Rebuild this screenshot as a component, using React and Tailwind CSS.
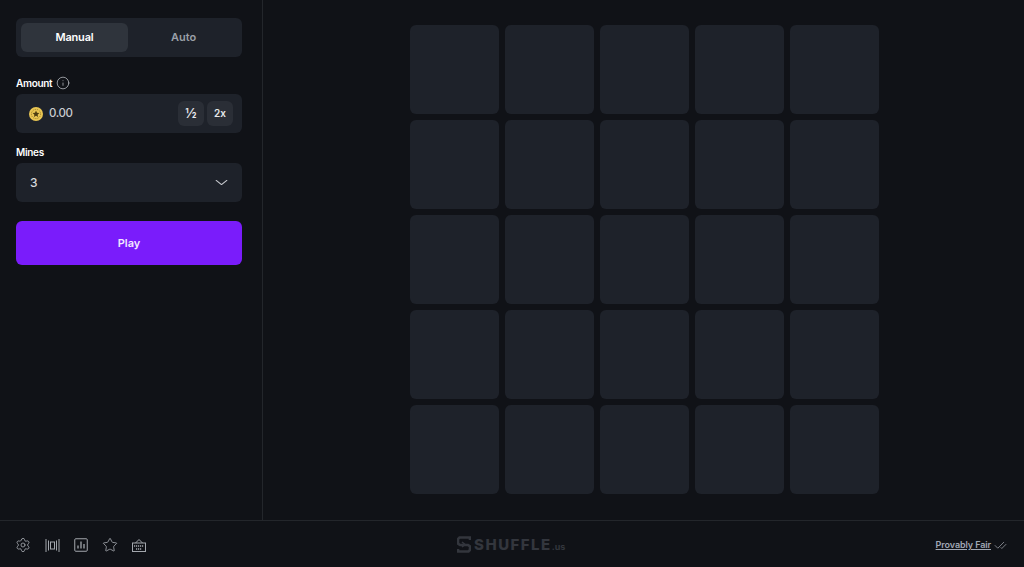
import { Info, ChevronDown, Settings, Star, CheckCheck } from 'lucide-react'

const tiles = Array.from({ length: 25 }, (_, i) => i)

function CoinIcon() {
  return (
    <svg width="14" height="14" viewBox="0 0 14 14" className="shrink-0">
      <circle cx="7" cy="7" r="7" fill="#e9c653" />
      <circle cx="7" cy="7" r="4.6" fill="none" stroke="#8a6f1f" strokeWidth="0.8" strokeDasharray="1.2 1" />
      <path d="M7 3.6l1 2.2 2.4.25-1.8 1.6.5 2.35L7 8.8l-2.1 1.2.5-2.35-1.8-1.6L6 5.8z" fill="#4d3e12" />
    </svg>
  )
}

function SliderIcon() {
  return (
    <svg width="15" height="15" viewBox="0 0 15 15" fill="none" stroke="#a3a7ad" strokeWidth="1">
      <path d="M1 1v13M3.5 2.5v10M11.5 2.5v10M14 1v13" />
      <rect x="5.5" y="4" width="4" height="7" />
    </svg>
  )
}

function StatsIcon() {
  return (
    <svg width="14" height="14" viewBox="0 0 14 14" fill="none" stroke="#a3a7ad" strokeWidth="1">
      <rect x="0.75" y="0.75" width="12.5" height="12.5" rx="1" />
      <path d="M4 10.5V7.5M7 10.5V3.5M10 10.5V6" strokeWidth="1.3" />
    </svg>
  )
}

function KeyboardIcon() {
  return (
    <svg width="14" height="14" viewBox="0 0 14 14" fill="none" stroke="#a3a7ad" strokeWidth="1">
      <rect x="0.5" y="5" width="13" height="8.5" />
      <path d="M3.5 5 7 1.5 10.5 5" />
      <path d="M2 8h10M4 11h6" strokeWidth="1.3" strokeDasharray="1.2 0.8" />
    </svg>
  )
}

function ShuffleMark() {
  return (
    <svg width="14" height="17" viewBox="0 0 14 17" fill="none" stroke="#33363d" strokeWidth="2.6">
      <path d="M13 4V1.5H2.5L1 3v4.5L3 9h8l2 1.5V14l-1.5 1.5H1V13" />
      <path d="M5 6l3 2.5L5 11" strokeWidth="1.6" />
    </svg>
  )
}

export default function App() {
  return (
    <div className="w-[1024px] h-[567px] flex flex-col bg-[#101217] text-white overflow-hidden font-['Inter',sans-serif]">
      <div className="flex h-[520px]">
        <aside className="w-[263px] shrink-0 border-r border-[#23262b] pt-[18px] pl-4 pr-5">
          <div className="h-[39px] rounded-md bg-[#1e222a] p-[5px] flex">
            <button className="w-[107px] rounded-md bg-[#2f343c] text-[11px] font-semibold tracking-[-0.2px] text-white">Manual</button>
            <button className="flex-1 pl-[2px] text-[11px] font-semibold text-[#9a9fa7]">Auto</button>
          </div>

          <div className="mt-[19px] h-[14px] flex items-center gap-[4px] text-[10px] font-semibold tracking-[-0.3px] text-white">
            Amount
            <Info size={14} strokeWidth={1.25} className="text-[#c4c7cc]" />
          </div>
          <div className="mt-[4px] h-[39px] rounded-md bg-[#1e222a] flex items-center pl-[13px] pr-[9px]">
            <CoinIcon />
            <span className="ml-[6px] text-[11.5px] font-medium tracking-[-0.4px] text-[#c9ccd1]">0.00</span>
            <button className="ml-auto w-[26px] h-[25px] rounded-md bg-[#2a2e36] text-[13px] font-semibold text-[#e5e7ea]">½</button>
            <button className="ml-[3px] w-[26px] h-[25px] rounded-md bg-[#2a2e36] text-[10px] font-semibold text-[#e5e7ea]">2x</button>
          </div>

          <div className="mt-[12px] h-[14px] flex items-center text-[10px] font-semibold tracking-[-0.3px] text-white">Mines</div>
          <div className="mt-[4px] h-[39px] rounded-md bg-[#1e222a] flex items-center justify-between pl-[14px] pr-[12px]">
            <span className="text-[12px] font-medium text-[#d6d8dc]">3</span>
            <ChevronDown size={17} strokeWidth={1.25} className="text-[#c4c7cc] scale-x-125" />
          </div>

          <button className="mt-[19px] w-full h-[44px] rounded-md bg-[#7a1cfb] text-[11px] font-semibold text-[#f1e6ff]">Play</button>
        </aside>

        <main className="flex-1 flex justify-center pt-[25px] pl-[2px]">
          <div className="grid grid-cols-[repeat(5,89px)] grid-rows-[repeat(5,89px)] gap-[6px]">
            {tiles.map((t) => (
              <div key={t} className="rounded-md bg-[#1e222a]" />
            ))}
          </div>
        </main>
      </div>

      <footer className="h-[47px] border-t border-[#23262b] flex items-center relative pl-[15px] pr-[17px] pt-[2px]">
        <div className="flex items-center gap-[14px]">
          <Settings size={16} strokeWidth={1.25} className="text-[#a3a7ad]" />
          <SliderIcon />
          <StatsIcon />
          <Star size={16} strokeWidth={1.25} className="text-[#a3a7ad]" />
          <KeyboardIcon />
        </div>
        <div className="absolute left-[457px] top-[15px] flex items-center gap-[3px]">
          <ShuffleMark />
          <span className="text-[15px] leading-none font-extrabold tracking-[1.5px] text-[#33363d]">SHUFFLE</span>
          <span className="-ml-[3px] text-[9px] leading-none font-bold text-[#33363d] mt-[4px]">.us</span>
        </div>
        <div className="ml-auto flex items-center gap-[3px]">
          <a className="text-[9px] font-semibold tracking-[-0.1px] text-[#a0a7b4] underline">Provably Fair</a>
          <CheckCheck size={13} strokeWidth={1.25} className="text-[#b0b4bb]" />
        </div>
      </footer>
    </div>
  )
}
